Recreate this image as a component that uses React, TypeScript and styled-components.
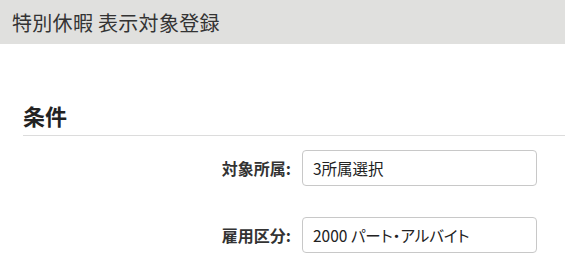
import { createGlobalStyle, styled } from 'styled-components';

const GlobalStyle = createGlobalStyle`
  body {
    margin: 0;
    background: #fff;
    font-family: "Noto Sans CJK JP", "Noto Sans", sans-serif;
    color: #333;
  }
`;

const fields = [
  { label: '対象所属:', value: '3所属選択' },
  { label: '雇用区分:', value: '2000 パート・アルバイト' },
];

export default function App() {
  return (
    <>
      <GlobalStyle />
      <St.Page>
        <St.Header>特別休暇 表示対象登録</St.Header>
        <St.Section>
          <St.Heading>条件</St.Heading>
          <St.Form>
            {fields.map((f) => (
              <St.Row key={f.label}>
                <St.Label>{f.label}</St.Label>
                <St.Input readOnly value={f.value} />
              </St.Row>
            ))}
          </St.Form>
        </St.Section>
      </St.Page>
    </>
  );
}

const St = {
  Page: styled.div`
    width: 565px;
    height: 280px;
    overflow: hidden;
  `,
  Header: styled.div`
    height: 44px;
    padding: 0 12px;

    display: flex;
    align-items: center;

    background-color: #e0e0de;
    font-size: 20px;
    letter-spacing: 0.3px;
    color: #333;
  `,
  Section: styled.div`
    margin-left: 23px;
    padding-top: 56px;
  `,
  Heading: styled.h2`
    margin: 0;
    padding-bottom: 5px;

    border-bottom: 1px solid #dcdcdc;

    font-size: 22px;
    font-weight: 700;
    line-height: 30px;
    color: #222;
  `,
  Form: styled.div`
    display: flex;
    flex-direction: column;
    gap: 31px;

    padding-top: 14px;
  `,
  Row: styled.div`
    display: grid;
    grid-template-columns: 268px 235px;
    column-gap: 11px;
    align-items: center;
  `,
  Label: styled.div`
    text-align: right;
    font-size: 16px;
    font-weight: 700;
    color: #333;
  `,
  Input: styled.input`
    box-sizing: border-box;
    height: 36px;
    padding: 0 10px;

    border: 1px solid #c8c8c8;
    border-radius: 4px;
    outline: none;

    font-family: inherit;
    font-size: 15.5px;
    font-feature-settings: "palt";
    color: #222;
  `,
};
